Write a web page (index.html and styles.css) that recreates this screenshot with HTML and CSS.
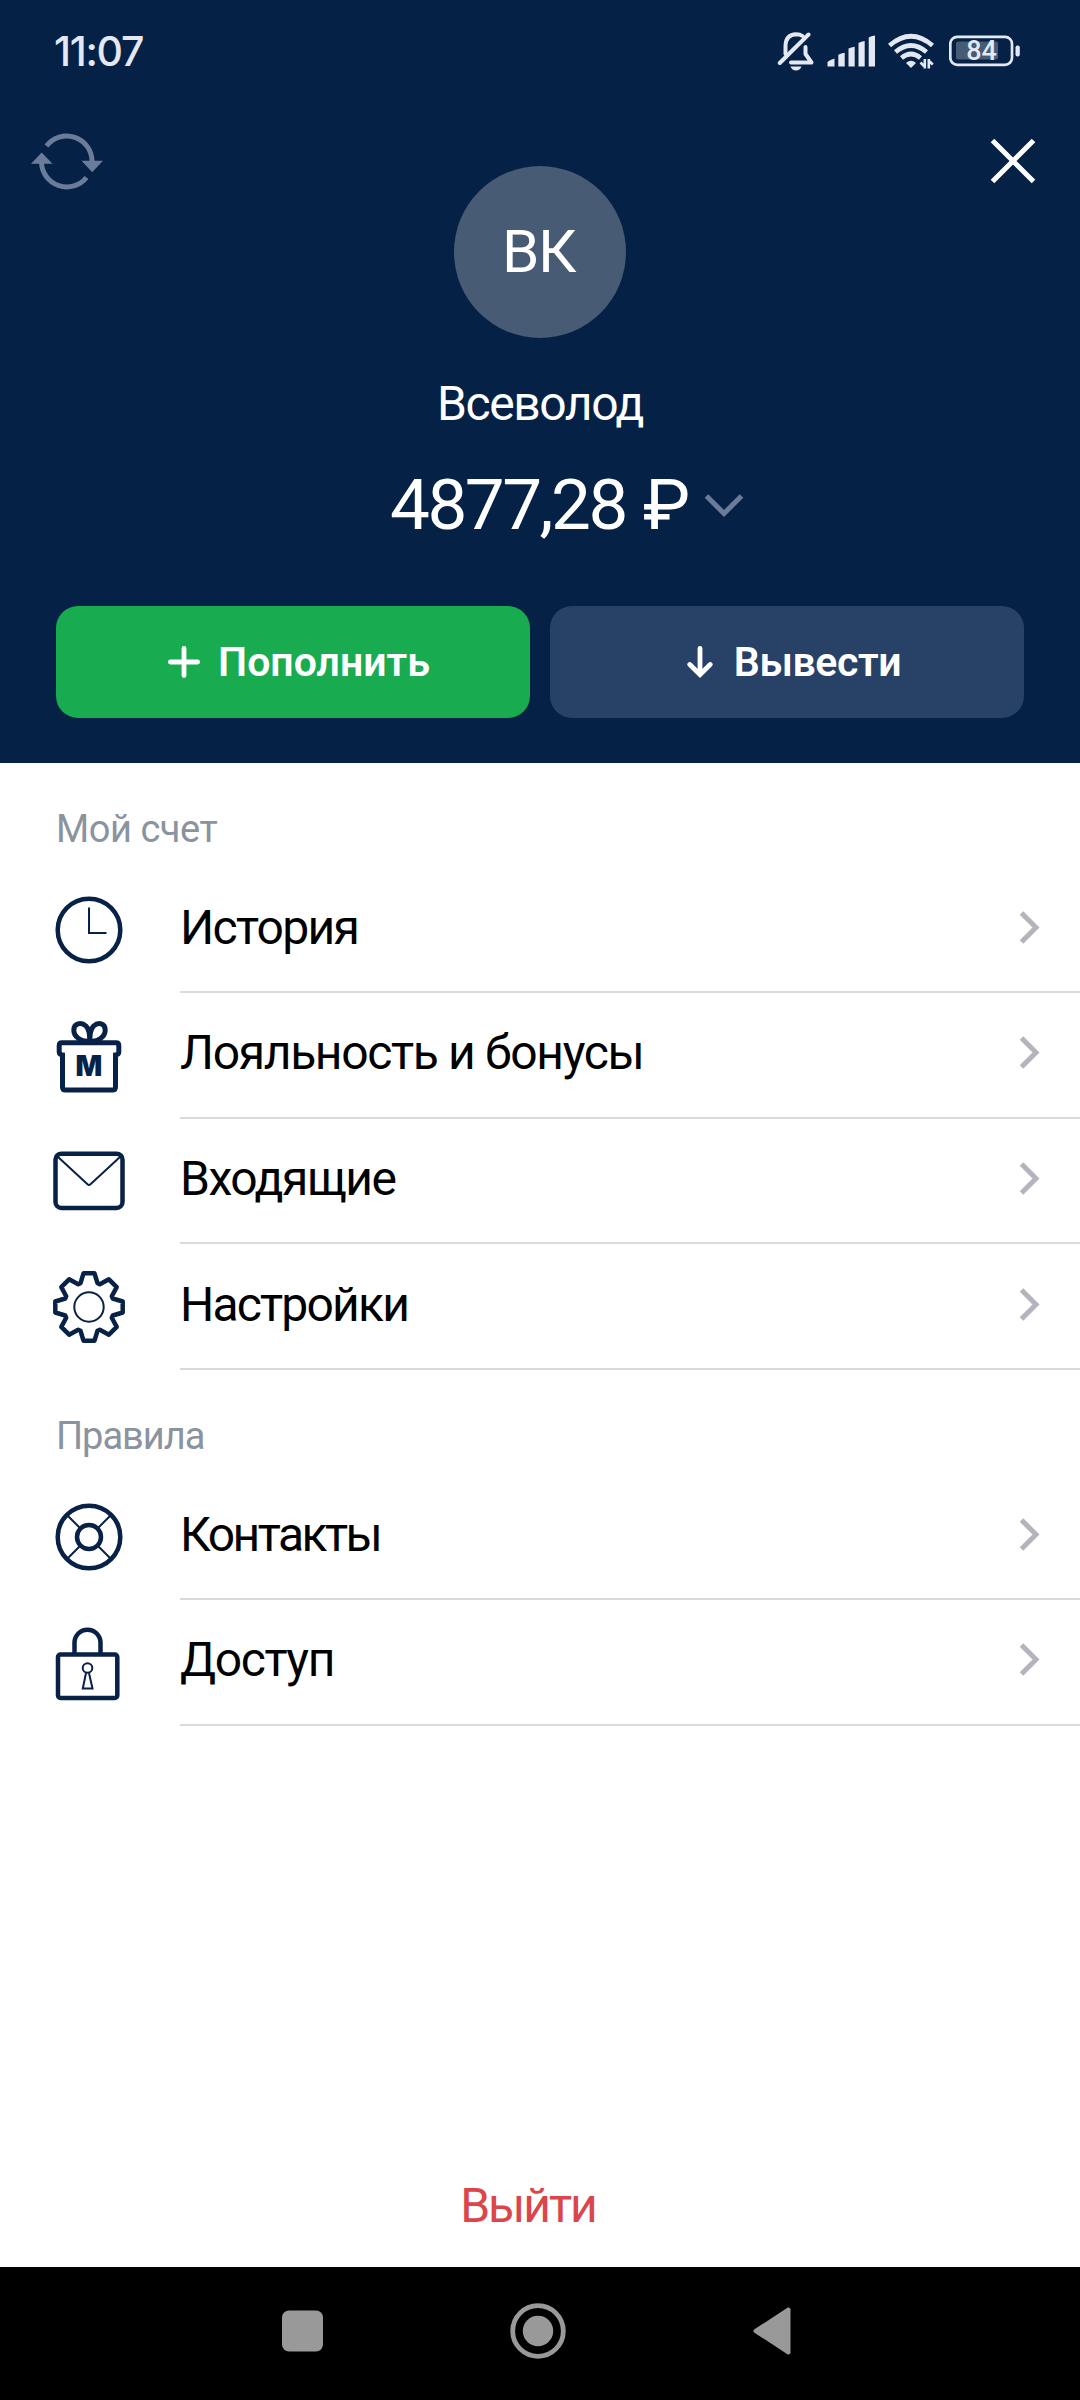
FILE: index.html
```html
<!DOCTYPE html>
<html lang="ru">
<head>
<meta charset="utf-8">
<title>Профиль</title>
<link rel="stylesheet" href="styles.css">
</head>
<body>
<div class="screen">
  <header class="header">
    <div class="status">
      <span class="clock">11:07</span>
      <div class="status-icons">
        <svg class="bell" width="38" height="42" viewBox="777 30 38 42" fill="none" stroke="#e3e8f2" stroke-width="4" stroke-linecap="round" stroke-linejoin="round">
          <path d="M785.500 54V45.500Q786 34.500 796 34.200Q800 34.200 802.500 36"/>
          <path d="M805.500 47V54L811.500 62.500H791"/>
          <path d="M779.800 63L808.500 34.500"/>
          <path d="M790.500 66.500H801.500Q800 70.500 796 70.500T790.500 66.500Z" fill="#e3e8f2" stroke="none"/>
        </svg>
        <svg class="signal" width="48" height="32" viewBox="827 35 48 32" fill="#e3e8f2">
          <path d="M827.500 66.500V62Q830 59.500 834.500 58.500V66.500ZM838.300 66.500V54.800Q841 53.300 844.700 52.700V66.500ZM848.500 66.500V48.500Q851 47.300 854.700 46.700V66.500ZM858.500 66.500V43Q861 41.500 864.700 41V66.500ZM868.700 66.500V37.500Q871 35.800 875 35.500V66.500Z"/>
        </svg>
        <svg class="wifi" width="47" height="36" viewBox="888 33 47 36" fill="none" stroke="#e3e8f2" stroke-width="4.600">
          <path d="M889.500 45.500Q911 27 932.500 45.500"/>
          <path d="M895.500 52Q911 39 926.500 52"/>
          <path d="M901.500 58Q911 50 920.500 58"/>
          <path d="M906 63Q911 58.500 916 63L911 68Z" fill="#e3e8f2" stroke="none"/>
          <path d="M924.800 59V68.500M920.500 62.500L924 66M928.800 68.500V59M932.800 64.500L929 61" stroke-width="2.600"/>
        </svg>
        <svg class="battery" width="72" height="32" viewBox="949 34.500 72 32" fill="none">
          <rect x="950.300" y="36.300" width="61.700" height="28" rx="7" stroke="#e3e8f2" stroke-width="2.700"/>
          <rect x="956" y="41" width="42" height="18" rx="2" fill="#475b75"/>
          <rect x="1015.500" y="45" width="4.300" height="11" rx="2" fill="#e3e8f2"/>
          <text class="charge" x="981.500" y="59.500" text-anchor="middle">84</text>
        </svg>
      </div>
    </div>

    <div class="top">
      <svg class="refresh" width="74" height="58" viewBox="30.500 132.500 74 58" fill="none" stroke="#6b7c9b" stroke-width="5">
        <path d="M47 146.500A25.300 25.300 0 0 1 92.500 162"/>
        <path d="M42 163A25.300 25.300 0 0 0 87 178"/>
        <path d="M82 161.200H103.500L92.700 172.700ZM31.500 164.300H53L42.200 153Z" fill="#6b7c9b" stroke="none"/>
      </svg>
      <div class="avatar">ВК</div>
      <svg class="close" width="46" height="46" viewBox="0 0 46 46" stroke="#fff" stroke-width="5"><path d="M2.500 2.500L43.500 43.500M43.500 2.500L2.500 43.500"/></svg>
    </div>

    <div class="name">Всеволод</div>
    <div class="balance">
      <span class="amount">4877,28 ₽</span>
      <svg width="40" height="25" viewBox="0 0 40 25" fill="none" stroke="#6b7c9b" stroke-width="5"><path d="M2.500 3L20 20.500L37.500 3"/></svg>
    </div>

    <div class="actions">
      <button class="btn deposit">
        <svg width="32" height="32" viewBox="0 0 32 32" stroke="#fff" stroke-width="4.800" stroke-linecap="round"><path d="M16 2.400V29.600M2.400 16H29.600"/></svg>
        <span>Пополнить</span>
      </button>
      <button class="btn withdraw">
        <svg width="26" height="33" viewBox="0 0 26 33" fill="none" stroke="#fff" stroke-width="4.800" stroke-linecap="round"><path d="M13 2.400V28M2.800 18.500L13 28.700L23.200 18.500"/></svg>
        <span>Вывести</span>
      </button>
    </div>
  </header>

  <main class="menu">
    <h2>Мой счет</h2>
    <a class="row">
      <svg class="icon" viewBox="-40 -40 80 80"><circle r="31.300"/><path class="thin" d="M0 -22.500V3H17.500"/></svg>
      <span class="item"><span class="label history">История</span><svg class="chevron" viewBox="0 0 21 33"><path d="M2.500 2L17 16.500L2.500 31"/></svg></span>
    </a>
    <a class="row">
      <svg class="icon gift" viewBox="-40 -40 80 80">
        <path d="M-26.500 -1Q-29.800 -1.500 -29.800 -4V-10.500Q-29.800 -13.300 -27 -13.300H27Q29.800 -13.300 29.800 -10.500V-4Q29.800 -1.500 26.500 -1V31Q26.500 34 23.500 34H-23.500Q-26.500 34 -26.500 31Z"/>
        <path d="M.8 -15C-8 -14 -15.200 -19 -15.200 -26C-15.200 -32.500 -8 -34.500 -3 -30C0 -27 .8 -22 .8 -15C.8 -22 1.600 -27 4.600 -30C9.600 -34.500 16.200 -32.500 16.200 -26C16.200 -19 9 -14 .8 -15Z"/>
        <text x="0" y="20.300" text-anchor="middle">M</text>
      </svg>
      <span class="item"><span class="label loyalty">Лояльность и бонусы</span><svg class="chevron" viewBox="0 0 21 33"><path d="M2.500 2L17 16.500L2.500 31"/></svg></span>
    </a>
    <a class="row">
      <svg class="icon" viewBox="-40 -40 80 80"><rect x="-33.500" y="-27.300" width="67" height="54.300" rx="6"/><path class="thin" d="M-31.500 -24.500L-1.500 3.300Q0 4.500 1.500 3.300L31.500 -24.500"/></svg>
      <span class="item"><span class="label inbox">Входящие</span><svg class="chevron" viewBox="0 0 21 33"><path d="M2.500 2L17 16.500L2.500 31"/></svg></span>
    </a>
    <a class="row">
      <svg class="icon" viewBox="-40 -40 80 80" stroke-linejoin="round">
        <path d="M-8.500 -23.800L-5.500 -33.700H5.500L8.500 -23.800L10.800 -22.800L19.900 -27.700L27.700 -19.900L22.800 -10.800L23.800 -8.500L33.700 -5.500V5.500L23.800 8.500L22.800 10.800L27.700 19.900L19.900 27.700L10.800 22.800L8.500 23.800L5.500 33.700H-5.500L-8.500 23.800L-10.800 22.800L-19.900 27.700L-27.700 19.900L-22.800 10.800L-23.800 8.500L-33.700 5.500V-5.500L-23.800 -8.500L-22.800 -10.800L-27.700 -19.900L-19.900 -27.700L-10.800 -22.800Z"/>
        <circle class="thin" r="14.700"/>
      </svg>
      <span class="item"><span class="label settings">Настройки</span><svg class="chevron" viewBox="0 0 21 33"><path d="M2.500 2L17 16.500L2.500 31"/></svg></span>
    </a>

    <h2 class="rules">Правила</h2>
    <a class="row">
      <svg class="icon" viewBox="-40 -40 80 80"><circle r="31.300"/><circle r="12"/><path class="thin" d="M-9.500 -9.500L-21.500 -21.500M9.500 -9.500L21.500 -21.500M-9.500 9.500L-21.500 21.500M9.500 9.500L21.500 21.500"/></svg>
      <span class="item"><span class="label contacts">Контакты</span><svg class="chevron" viewBox="0 0 21 33"><path d="M2.500 2L17 16.500L2.500 31"/></svg></span>
    </a>
    <a class="row">
      <svg class="icon" viewBox="-40 -40 80 80">
        <rect x="-31" y="-8.500" width="59.300" height="43.500" rx="2.500"/>
        <path d="M-14.500 -9V-20.300A13 13 0 0 1 11.500 -20.300V-9"/>
        <path class="thin" d="M-3 10L-6.200 25.500H3.500L0 10"/><circle class="thin" cx="-1.500" cy="5" r="4.800"/>
      </svg>
      <span class="item"><span class="label access">Доступ</span><svg class="chevron" viewBox="0 0 21 33"><path d="M2.500 2L17 16.500L2.500 31"/></svg></span>
    </a>
  </main>

  <a class="logout">Выйти</a>

  <nav class="navbar">
    <svg width="41" height="42" viewBox="0 0 41 42"><rect width="41" height="41" y=".5" rx="7" fill="#999"/></svg>
    <svg width="56" height="56" viewBox="0 0 56 56"><circle cx="28" cy="28" r="25.300" fill="none" stroke="#999" stroke-width="4.800"/><circle cx="28" cy="28" r="15.200" fill="#999"/></svg>
    <svg width="38" height="48" viewBox="0 0 38 48"><path d="M2.500 24L35.500 2.500V45.500Z" fill="#999" stroke="#999" stroke-width="4" stroke-linejoin="round"/></svg>
  </nav>
</div>
</body>
</html>
```
FILE: styles.css
```css
* { box-sizing: border-box; }

body {
  margin: 0;
  font-family: Roboto, "Noto Sans", sans-serif;
  background: #fff;
  color: #000;
}

svg { display: block; flex: none; }

.screen {
  display: flex;
  flex-direction: column;
  width: 1080px;
  height: 2400px;
}

.header {
  display: flex;
  flex-direction: column;
  height: 763px;
  background: #052146;
  color: #fff;
}

.status {
  display: flex;
  justify-content: space-between;
  align-items: center;
  height: 102px;
  padding: 0 59px 0 54px;
  color: #e3e8f2;
}

.clock {
  font: 500 41px/50px Inter, sans-serif;
  letter-spacing: -1.300px;
}

.status-icons { display: flex; align-items: center; }
.signal { margin-left: 12px; }
.wifi { margin-left: 13px; }
.battery { margin-left: 14px; }
.charge { font: 500 27px Roboto, sans-serif; fill: #e3e8f2; }

.top {
  display: grid;
  grid-template-columns: 424px 172px 1fr;
  height: 236px;
  padding: 0 44px 0 30px;
}

.refresh { margin-top: 30px; }
.close { margin-top: 36px; justify-self: end; }

.avatar {
  align-self: end;
  height: 172px;
  padding-right: 3px;
  border-radius: 50%;
  background: #475b75;
  font-size: 60px;
  line-height: 171px;
  letter-spacing: -1.400px;
  text-align: center;
}

.name {
  margin-top: 36px;
  font-size: 48px;
  line-height: 60px;
  letter-spacing: -1.400px;
  text-align: center;
}

.balance {
  display: flex;
  align-items: center;
  gap: 16px;
  margin-top: 31px;
  padding-left: 390px;
  font-size: 71px;
  line-height: 80px;
}
.amount {
  letter-spacing: -2.500px;
  word-spacing: 2px;
}

.actions {
  display: grid;
  grid-template-columns: 1fr 1fr;
  gap: 20px;
  margin-top: 61px;
  padding: 0 56px;
}

.btn {
  display: flex;
  align-items: center;
  justify-content: center;
  gap: 18px;
  height: 112px;
  padding: 0;
  border: 0;
  border-radius: 22px;
  color: #fff;
  font: 600 41px/50px Roboto, sans-serif;
}

.deposit { background: #19ab4f; padding-left: 12px; }
.withdraw { background: #284267; padding-left: 14px; gap: 21px; letter-spacing: -.400px; }

.menu { display: flex; flex-direction: column; }

h2 {
  height: 104.300px;
  margin: 0;
  padding: 42px 0 0 56px;
  font-size: 38px;
  font-weight: 400;
  line-height: 48px;
  letter-spacing: -.450px;
  color: #8a939e;
}
.rules { letter-spacing: -1px; }

.row {
  display: flex;
  align-items: center;
  height: 125.670px;
  padding-left: 49px;
}

.icon {
  width: 80px;
  height: 80px;
  margin-right: 51px;
  fill: none;
  stroke: #082146;
  stroke-width: 4.500;
}
.icon .thin { stroke-width: 2; }
.gift { stroke-width: 5; }
.gift text { font: 900 28px Inter, sans-serif; fill: #082146; stroke: none; }

.item {
  display: flex;
  flex: 1;
  align-items: center;
  justify-content: space-between;
  height: 100%;
  padding: 0 40px 4px 0;
  border-bottom: 2px solid #d6dbdd;
}

.label { font-size: 48px; line-height: 61px; }
.history { letter-spacing: -1.650px; }
.loyalty { letter-spacing: -1.330px; }
.inbox { letter-spacing: -1.450px; }
.settings { letter-spacing: -1.800px; }
.contacts { letter-spacing: -2.500px; }
.access { letter-spacing: -1.400px; }

.chevron {
  width: 21px;
  height: 33px;
  fill: none;
  stroke: #b4b5bc;
  stroke-width: 5;
}

.logout {
  margin-top: auto;
  padding: 0 24px 31px 0;
  font-size: 48px;
  line-height: 60px;
  letter-spacing: -2px;
  text-align: center;
  color: #db454b;
}

.navbar {
  display: flex;
  align-items: center;
  justify-content: space-between;
  height: 133px;
  padding: 0 289px 6px 282px;
  background: #000;
}
```
